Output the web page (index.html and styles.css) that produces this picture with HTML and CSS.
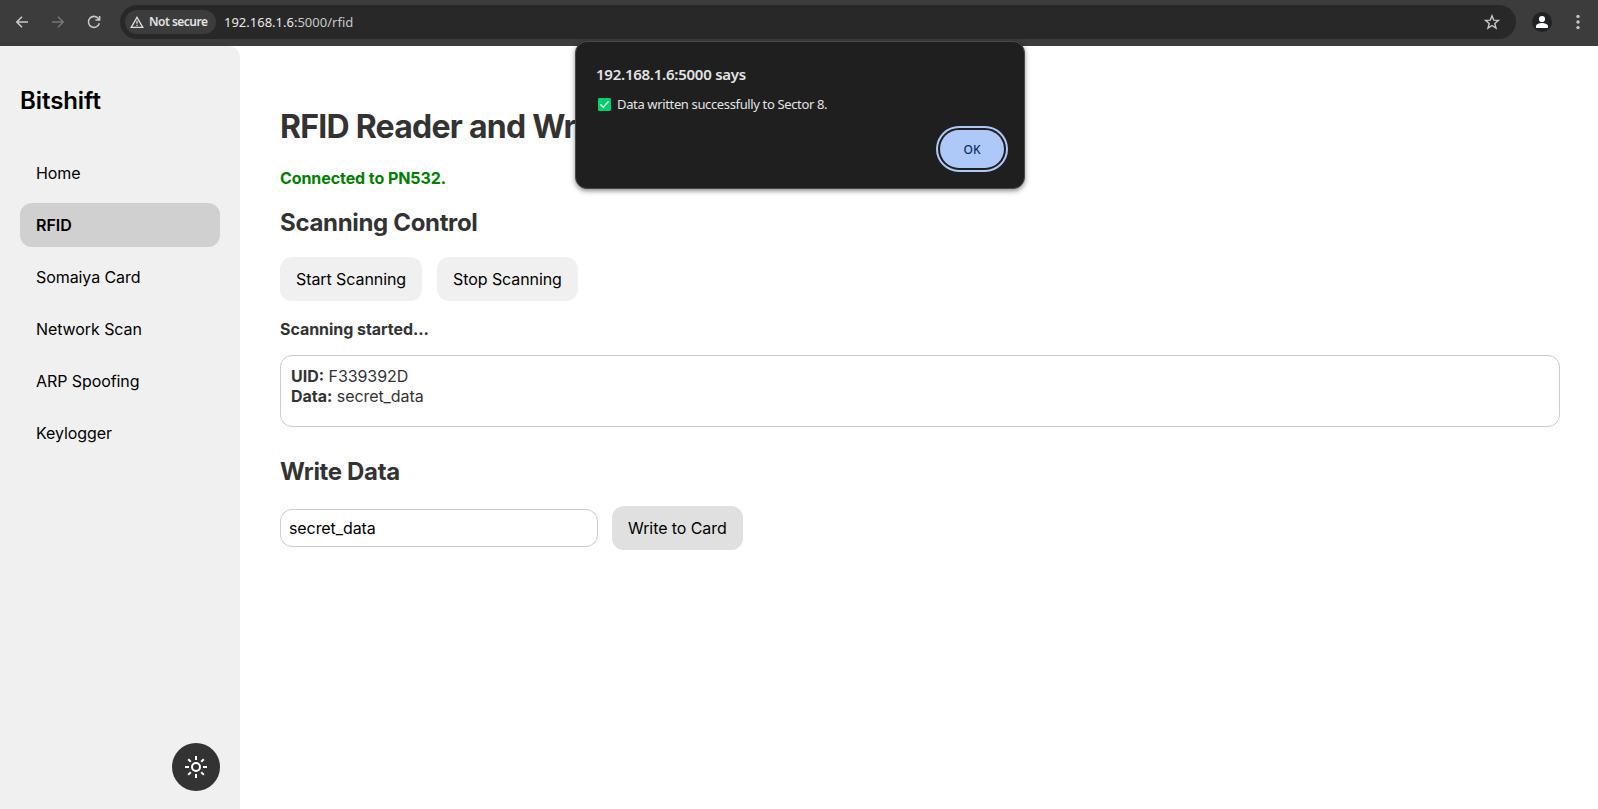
FILE: index.html
```html
<!DOCTYPE html>
<html lang="en">
<head>
<meta charset="utf-8">
<title>Bitshift</title>
<link rel="stylesheet" href="styles.css">
</head>
<body>
<header class="toolbar">
  <svg class="nav-icon back" viewBox="0 0 16 16"><path d="M14 8H3M8 2.8 2.8 8 8 13.2"/></svg>
  <svg class="nav-icon forward" viewBox="0 0 16 16"><path d="M2 8h11M8 2.8 13.2 8 8 13.2"/></svg>
  <svg class="nav-icon reload" viewBox="0 0 16 16"><path d="M13.3 9.2A5.5 5.5 0 1 1 12.4 4.6L13.6 6M13.6 1.9V6H9.4"/></svg>
  <div class="address">
    <div class="chip">
      <svg class="warn" viewBox="0 0 14 12"><path d="M7 1.4 12.8 11.3H1.2z"/><path d="M7 4.8v3M7 8.8v1.2"/></svg>
      <span class="chip-text">Not secure</span>
    </div>
    <span class="url"><span class="host">192.168.1.6</span>:5000/rfid</span>
    <svg class="star" viewBox="0 0 16 16"><path d="M8 1.8l1.7 4.3 4.7.3-3.6 3 1.2 4.7L8 11.5l-4 2.6 1.2-4.7-3.6-3 4.7-.3z"/></svg>
  </div>
  <svg class="profile" viewBox="0 0 20 20"><circle cx="10" cy="10" r="10" fill="#202124"/><circle cx="10" cy="7" r="3.1" fill="#fff"/><path d="M4 16v-2c0-2 3.8-3 6-3s6 1 6 3v2z" fill="#fff"/></svg>
  <svg class="dots" viewBox="0 0 4 16"><circle cx="2" cy="2.4" r="1.7"/><circle cx="2" cy="8" r="1.7"/><circle cx="2" cy="13.6" r="1.7"/></svg>
</header>
<div class="page">
  <aside class="sidebar">
    <div class="brand">Bitshift</div>
    <nav class="menu">
      <a class="item">Home</a>
      <a class="item active">RFID</a>
      <a class="item">Somaiya Card</a>
      <a class="item">Network Scan</a>
      <a class="item">ARP Spoofing</a>
      <a class="item">Keylogger</a>
    </nav>
    <button class="theme"><svg viewBox="0 0 24 24"><circle cx="12" cy="12" r="4"/><path d="M12 1v4M12 19v4M1 12h4M19 12h4M4.2 4.2l2.6 2.6M17.2 17.2l2.6 2.6M4.2 19.8l2.6-2.6M17.2 6.8l2.6-2.6"/></svg></button>
  </aside>
  <main class="content">
    <h1 class="title">RFID Reader and Writer</h1>
    <p class="connected">Connected to PN532.</p>
    <h2 class="heading">Scanning Control</h2>
    <div class="buttons"><button class="btn">Start Scanning</button><button class="btn">Stop Scanning</button></div>
    <p class="status">Scanning started...</p>
    <div class="result"><div><b>UID:</b> F339392D</div><div><b>Data:</b> secret_data</div></div>
    <h2 class="heading">Write Data</h2>
    <div class="write-row"><input class="field" type="text" value="secret_data"><button class="btn pressed">Write to Card</button></div>
  </main>
</div>
<div class="dialog">
  <div class="dialog-title">192.168.1.6:5000 says</div>
  <div class="message">
    <svg class="check" viewBox="0 0 13 13"><rect width="13" height="13" rx="1.2" fill="#00d26a"/><path d="M2.7 6.7l2.5 2.6 5-5.6" fill="none" stroke="#f4f4f4" stroke-width="1.4" stroke-linecap="round"/></svg>
    <span class="message-text">Data written successfully to Sector 8.</span>
  </div>
  <button class="ok">OK</button>
</div>
</body>
</html>
```
FILE: styles.css
```css
* { box-sizing: border-box; }
body { margin: 0; height: 809px; overflow: hidden; display: flex; flex-direction: column; background: #fff; color: #333; font: 16px/20px Inter, sans-serif; letter-spacing: -.08px; }
button, input { font: inherit; letter-spacing: inherit; border: 0; margin: 0; color: #000; }
h1, h2, p { margin: 0; }

.toolbar { height: 46px; flex: none; display: flex; align-items: center; padding: 0 16px 2px 14px; background: #3c3c3c; font-family: "Noto Sans", sans-serif; }
.nav-icon { width: 16px; height: 16px; fill: none; stroke: #c7c7c7; stroke-width: 1.6; }
.forward { margin-left: 20px; stroke: #757575; }
.reload { margin-left: 20px; }
.address { flex: 1; height: 34px; margin-left: 18px; border-radius: 17px; background: #282828; display: flex; align-items: center; padding: 0 16px 0 5px; }
.chip { width: 91px; height: 24px; border-radius: 12px; background: #3c3c3c; display: flex; align-items: center; padding-left: 5px; gap: 5px; }
.warn { width: 14px; height: 12px; fill: none; stroke: #dedede; stroke-width: 1.3; flex: none; }
.chip-text { font-size: 12px; font-weight: 600; color: #e3e3e3; white-space: nowrap; letter-spacing: -.5px; }
.url { margin-left: 8px; flex: 1; font-size: 13px; color: #c7c7c7; letter-spacing: 0; }
.host { color: #e8e8e8; }
.star { width: 16px; height: 16px; fill: none; stroke: #c7c7c7; stroke-width: 1.4; }
.profile { width: 20px; height: 20px; margin-left: 16px; }
.dots { width: 4px; height: 16px; margin: 0 2px 0 24px; fill: #c7c7c7; }

.page { flex: 1; display: flex; min-height: 0; }
.sidebar { width: 240px; background: #f0f0f0; border-top-right-radius: 12px; padding: 40px 20px 18px; display: flex; flex-direction: column; }
.brand { font-size: 24px; line-height: 30px; font-weight: 600; color: #000; }
.menu { display: flex; flex-direction: column; gap: 8px; margin-top: 35px; }
.item { height: 44px; line-height: 44px; padding-left: 16px; border-radius: 12px; color: #000; }
.active { background: #d0d0d0; font-weight: 600; letter-spacing: 0; }
.theme { width: 48px; height: 48px; border-radius: 50%; background: #333; margin-top: auto; align-self: flex-end; padding: 0; display: grid; place-items: center; }
.theme svg { width: 24px; height: 24px; fill: none; stroke: #fff; stroke-width: 2; }

.content { flex: 1; padding: 61px 38px 0 40px; }
.title { font-size: 32px; line-height: 40px; font-weight: 700; letter-spacing: -.75px; }
.connected { margin-top: 21px; color: green; font-weight: 700; letter-spacing: -.08px; }
.heading { margin-top: 20px; font-size: 24px; line-height: 30px; font-weight: 700; letter-spacing: -.33px; }
.buttons { display: flex; gap: 15px; margin-top: 19px; }
.btn { height: 44px; padding: 0 16px; border-radius: 12px; background: #f0f0f0; white-space: nowrap; }
.status { margin-top: 18px; font-weight: 700; letter-spacing: -.05px; }
.result { margin-top: 16px; height: 72px; padding: 10px; border: 1px solid #ccc; border-radius: 12px; }
.result b { font-weight: 700; letter-spacing: 0; }
.result + .heading { margin-top: 30px; }
.write-row { display: flex; align-items: center; gap: 14px; margin-top: 19px; }
.field { width: 318px; height: 38px; padding: 0 8px; border: 1px solid #ccc; border-radius: 12px; background: #fff; }
.pressed { background: #e0e0e0; }

.dialog { position: absolute; left: 575px; top: 41px; width: 450px; height: 148px; border-radius: 12px; border: 1px solid #484848; background: #1f1f1f; box-shadow: 0 2px 5px rgba(0,0,0,.45); padding: 22px 20px 0 20px; display: flex; flex-direction: column; font-family: "Noto Sans", sans-serif; color: #e3e3e3; }
.dialog-title { font-size: 15px; line-height: 20px; font-weight: 600; white-space: nowrap; letter-spacing: -.25px; }
.message { display: flex; align-items: center; gap: 6px; height: 20px; margin-top: 10px; padding-left: 2px; }
.check { width: 13px; height: 13px; }
.message-text { font-size: 13px; letter-spacing: -.36px; white-space: nowrap; }
.ok { align-self: flex-end; width: 64px; height: 38px; margin-top: 16px; border-radius: 19px; background: #aec9f8; color: #0b2f6b; font-size: 12px; line-height: 18px; font-weight: 500; outline: 2px solid #aec9f8; outline-offset: 2px; padding: 2px 0 0; }
```
